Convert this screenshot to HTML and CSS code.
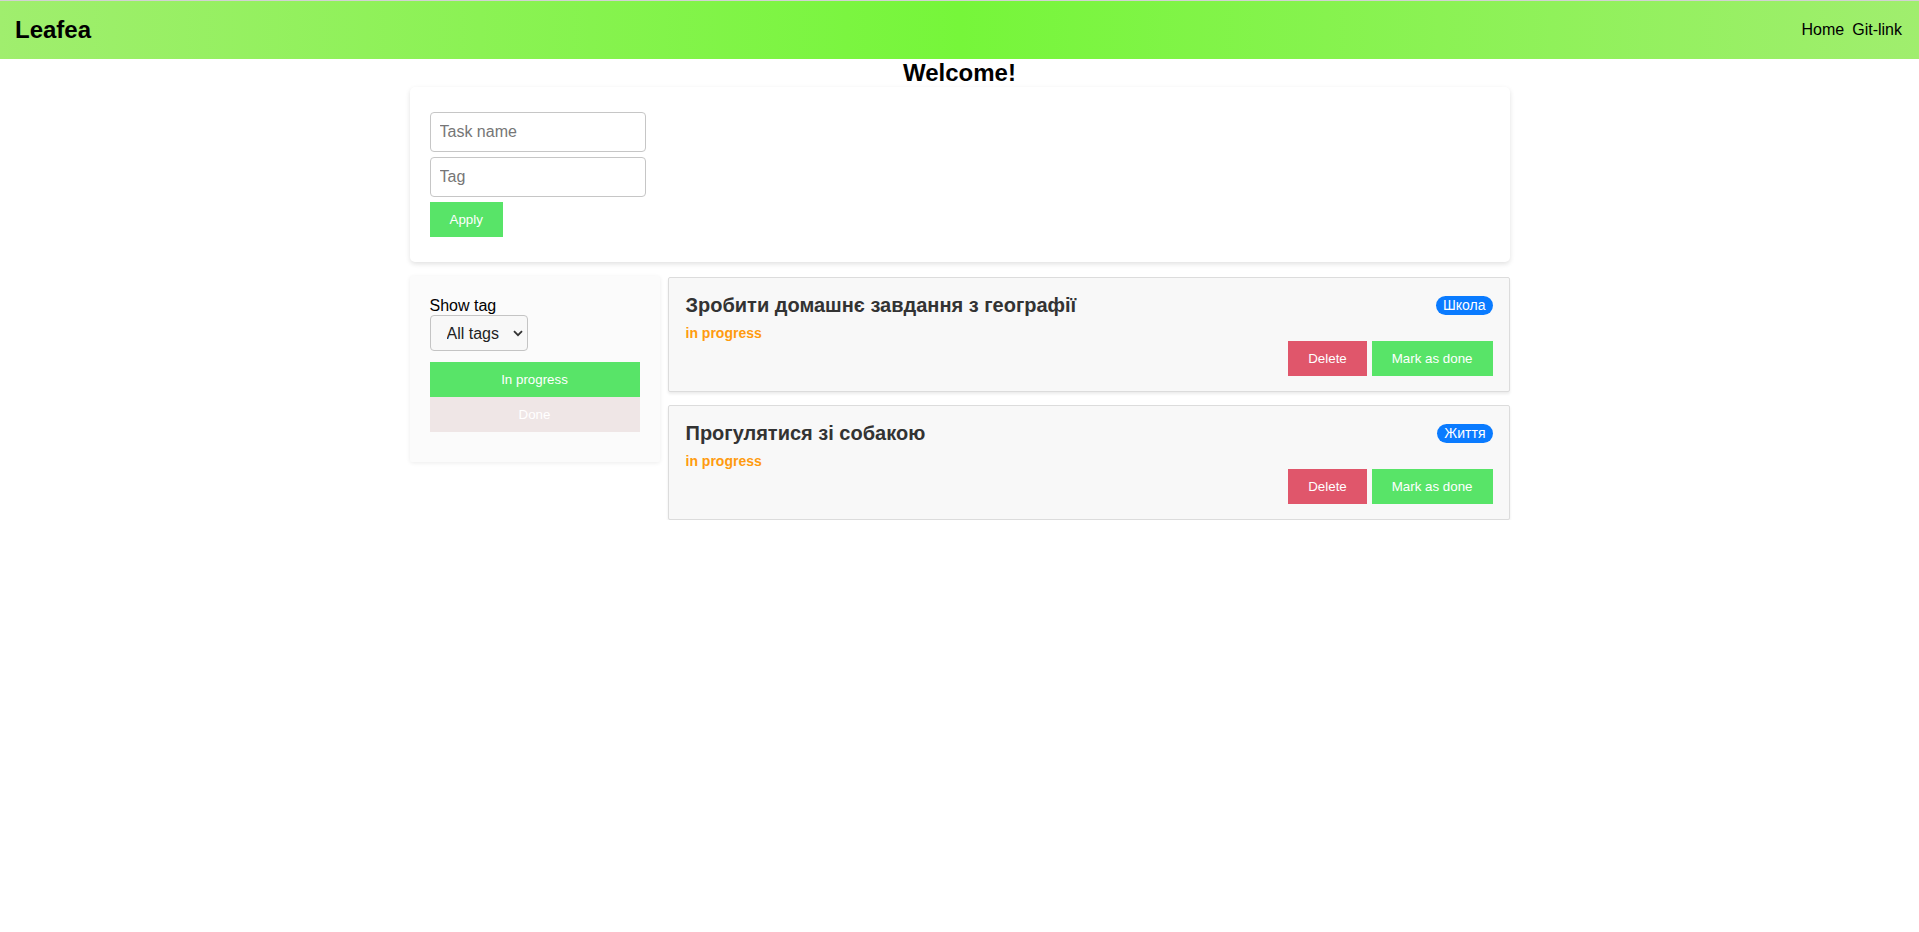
FILE: index.html
```html
<!DOCTYPE html>
<html lang="uk">
<head>
<meta charset="utf-8">
<title>Leafea</title>
<link rel="stylesheet" href="styles.css">
</head>
<body>
<header class="topbar">
  <div class="brand">Leafea</div>
  <nav class="nav">
    <a class="nav-link" href="#">Home</a>
    <a class="nav-link" href="#">Git-link</a>
  </nav>
</header>
<main class="container">
  <h2 class="welcome">Welcome!</h2>
  <section class="form-card">
    <form class="task-form">
      <input class="field" type="text" placeholder="Task name">
      <input class="field" type="text" placeholder="Tag">
      <button class="btn btn-green" type="button">Apply</button>
    </form>
  </section>
  <div class="board">
    <aside class="sidebar">
      <label class="show-label">Show tag</label>
      <div class="select-wrap">
        <select class="tag-select">
          <option>All tags</option>
          <option>Школа</option>
          <option>Життя</option>
        </select>
        <svg class="chev" width="10" height="7" viewBox="0 0 10 7"><path d="M1 1.2 L5 5.2 L9 1.2" fill="none" stroke="#333" stroke-width="1.8"/></svg>
      </div>
      <div class="filter-btns">
        <button class="btn btn-green btn-block" type="button">In progress</button>
        <button class="btn btn-muted btn-block" type="button">Done</button>
      </div>
    </aside>
    <div class="tasks">
      <article class="task">
        <div class="task-head">
          <h3 class="task-title">Зробити домашнє завдання з географії</h3>
          <span class="pill">Школа</span>
        </div>
        <div class="status">in progress</div>
        <div class="task-actions">
          <button class="btn btn-red" type="button">Delete</button>
          <button class="btn btn-green" type="button">Mark as done</button>
        </div>
      </article>
      <article class="task">
        <div class="task-head">
          <h3 class="task-title">Прогулятися зі собакою</h3>
          <span class="pill">Життя</span>
        </div>
        <div class="status">in progress</div>
        <div class="task-actions">
          <button class="btn btn-red" type="button">Delete</button>
          <button class="btn btn-green" type="button">Mark as done</button>
        </div>
      </article>
    </div>
  </div>
</main>
</body>
</html>
```
FILE: styles.css
```css
* { box-sizing: border-box; }

body {
  margin: 0;
  font-family: "Liberation Sans", Arial, sans-serif;
  color: #000;
  background: #fff;
}

.topbar {
  height: 59px;
  border-top: 1px solid #d2d2d2;
  background: linear-gradient(90deg, #a0ee6e 0%, #76f63a 50%, #a0ee6e 100%);
  display: flex;
  align-items: center;
  justify-content: space-between;
  padding: 0 17px 0 15px;
}

.brand {
  font-size: 24px;
  font-weight: bold;
}

.nav {
  display: flex;
  gap: 8px;
}

.nav-link {
  color: #000;
  text-decoration: none;
  font-size: 16px;
}

.container {
  width: 1100px;
  margin: 0 auto;
}

.welcome {
  margin: 0;
  font-size: 24px;
  text-align: center;
}

.form-card {
  background: #fff;
  border-radius: 5px;
  box-shadow: 0 2px 5px rgba(0, 0, 0, 0.12);
  padding: 25px 20px;
}

.task-form {
  display: flex;
  flex-direction: column;
  align-items: flex-start;
  gap: 5px;
}

.field {
  width: 216px;
  height: 40px;
  padding: 0 9px;
  font-family: inherit;
  font-size: 16px;
  border: 1px solid #c6c6c6;
  border-radius: 4px;
  background: #fff;
}
.field::placeholder { color: #767676; }

.btn {
  border: none;
  height: 35px;
  padding: 0 20px;
  font-family: inherit;
  font-size: 13.33px;
  color: #fff;
  cursor: pointer;
}
.btn-green { background: #58e468; }
.btn-red { background: #e0566b; }
.btn-muted { background: #efe6e6; }
.btn-block { width: 100%; display: block; }

.board {
  display: flex;
  align-items: flex-start;
  gap: 8px;
  margin-top: 14px;
}

.sidebar {
  width: 250px;
  flex: none;
  background: #fbfbfb;
  border-radius: 2px;
  box-shadow: 0 1px 4px rgba(0, 0, 0, 0.08);
  padding: 21px 20px 30px;
}

.show-label {
  display: block;
  font-size: 16px;
  line-height: 18px;
}

.select-wrap {
  position: relative;
  width: 98px;
  height: 36px;
}

.tag-select {
  display: block;
  appearance: none;
  -webkit-appearance: none;
  width: 98px;
  height: 36px;
  padding: 0 0 0 16px;
  font-family: inherit;
  font-size: 16px;
  color: #222;
  background: #f8f8f8;
  border: 1px solid #c4c4c4;
  border-radius: 4px;
}

.chev {
  position: absolute;
  right: 5px;
  top: 15px;
  pointer-events: none;
}

.filter-btns {
  margin-top: 11px;
}

.tasks {
  flex: 1;
  display: flex;
  flex-direction: column;
  gap: 13px;
  margin-top: 1px;
}

.task {
  background: #f8f8f8;
  border: 1px solid #dcdcdc;
  border-radius: 2px;
  box-shadow: 0 2px 3px rgba(0, 0, 0, 0.08);
  padding: 16px 16px 15px 17px;
}

.task-head {
  display: flex;
  align-items: center;
  justify-content: space-between;
}

.task-title {
  margin: 0;
  font-size: 20px;
  line-height: 23px;
  color: #333;
}

.pill {
  background: #0a7bff;
  color: #fff;
  font-size: 14px;
  line-height: 19px;
  padding: 0 7px;
  border-radius: 10px;
}

.status {
  margin-top: 8px;
  font-size: 14px;
  line-height: 16px;
  font-weight: bold;
  color: #ff9b0f;
}

.task-actions {
  display: flex;
  justify-content: flex-end;
  gap: 5px;
}
```
